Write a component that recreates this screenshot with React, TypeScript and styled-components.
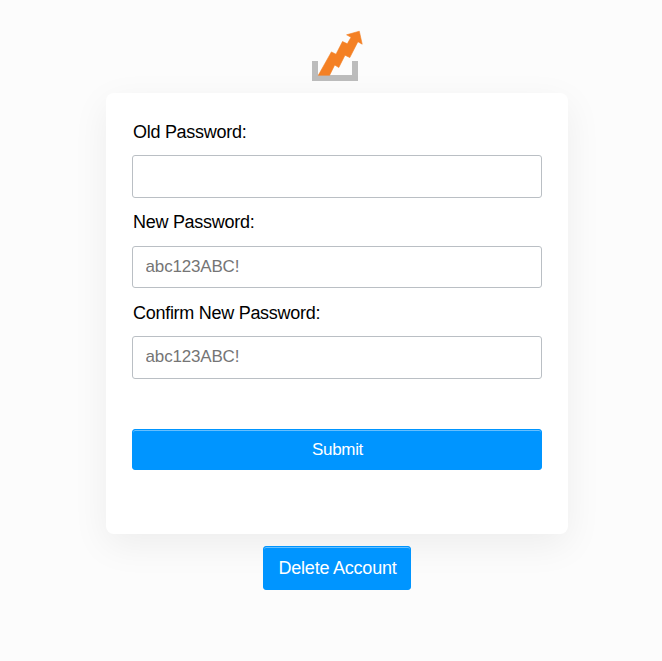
import React from "react";
import styled, { createGlobalStyle } from "styled-components";

const GlobalStyle = createGlobalStyle`
  * { box-sizing: border-box; }
  body {
    margin: 0;
    background: #fcfcfc;
    color: #000;
    font-family: "Liberation Sans", Arial, sans-serif;
  }
`;

const Page = styled.main`
  min-height: 661px;
  padding: 30px 0 0 12px;
  display: flex;
  flex-direction: column;
  align-items: center;
`;

const Logo = styled.svg`
  display: block;
  width: 52px;
  height: 52px;
  margin-bottom: 11px;
`;

const Card = styled.form`
  width: 462px;
  height: 441px;
  padding: 29px 26px 0;
  background: #fff;
  border-radius: 8px;
  box-shadow: 0 11px 37px rgba(0, 0, 0, 0.063);
`;

const Field = styled.div<{ $gap: number }>`
  display: flex;
  flex-direction: column;
  margin-bottom: ${(p) => p.$gap}px;
`;

const Label = styled.label<{ $space: number }>`
  height: 21px;
  margin-bottom: ${(p) => p.$space}px;
  padding-left: 1px;
  font-size: 18px;
  line-height: 21px;
  letter-spacing: -0.28px;
`;

const Input = styled.input<{ $height: number }>`
  width: 100%;
  height: ${(p) => p.$height}px;
  padding: 0 12.6px 1px;
  border: 1px solid #babfc4;
  border-radius: 3px;
  background: #fff;
  font-family: inherit;
  font-size: 17px;
  letter-spacing: -0.18px;
  outline: none;
`;

const Button = styled.button<{ $variant: "wide" | "small" }>`
  display: block;
  width: ${(p) => (p.$variant === "wide" ? "100%" : "148px")};
  height: ${(p) => (p.$variant === "wide" ? 41 : 44)}px;
  margin-top: ${(p) => (p.$variant === "wide" ? 50 : 12)}px;
  padding: 0 0 0 1px;
  border: 1px solid #0095ff;
  border-radius: 3px;
  background: #0095ff;
  box-shadow: inset 0 1px 0 rgba(255, 255, 255, 0.4);
  color: #fff;
  font-family: inherit;
  font-size: ${(p) => (p.$variant === "wide" ? 17 : 18)}px;
  letter-spacing: ${(p) => (p.$variant === "wide" ? -0.3 : -0.22)}px;
`;

export default function App() {
  return (
    <>
      <GlobalStyle />
      <Page>
        <Logo viewBox="0 0 52 52" aria-hidden="true">
          <path d="M1 31h6v14h34V31h6v20H1z" fill="#bcbcbc" />
          <path
            d="M7.3 45.3 20.4 21.9 25 24.2 31.5 11.5 36.3 13.8 40 7.3 35.6 4.8 48.3 1.2 51.2 14.2 46.9 11.7 38.8 27.6 34 25.2 27.8 37.5 23.7 35 18.6 45.3z"
            fill="#f48024"
            stroke="#f48024"
            strokeWidth="0.6"
          />
        </Logo>
        <Card onSubmit={(e) => e.preventDefault()}>
          <Field $gap={14}>
            <Label htmlFor="old" $space={12}>Old Password:</Label>
            <Input id="old" type="text" $height={43} />
          </Field>
          <Field $gap={15}>
            <Label htmlFor="next" $space={13}>New Password:</Label>
            <Input id="next" type="text" placeholder="abc123ABC!" $height={42} />
          </Field>
          <Field $gap={0}>
            <Label htmlFor="confirm" $space={12}>Confirm New Password:</Label>
            <Input id="confirm" type="text" placeholder="abc123ABC!" $height={43} />
          </Field>
          <Button type="submit" $variant="wide">Submit</Button>
        </Card>
        <Button type="button" $variant="small">Delete Account</Button>
      </Page>
    </>
  );
}
